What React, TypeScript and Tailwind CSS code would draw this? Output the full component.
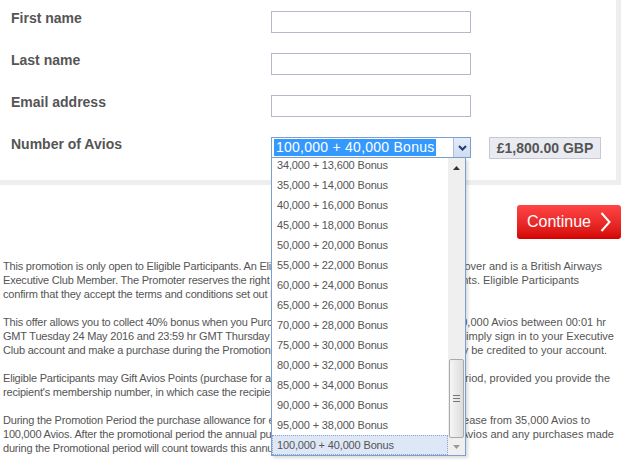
import React from "react";

const items = [
  "34,000 + 13,600 Bonus",
  "35,000 + 14,000 Bonus",
  "40,000 + 16,000 Bonus",
  "45,000 + 18,000 Bonus",
  "50,000 + 20,000 Bonus",
  "55,000 + 22,000 Bonus",
  "60,000 + 24,000 Bonus",
  "65,000 + 26,000 Bonus",
  "70,000 + 28,000 Bonus",
  "75,000 + 30,000 Bonus",
  "80,000 + 32,000 Bonus",
  "85,000 + 34,000 Bonus",
  "90,000 + 36,000 Bonus",
  "95,000 + 38,000 Bonus",
  "100,000 + 40,000 Bonus",
];

function Row({ label, children }: { label: string; children: React.ReactNode }) {
  return (
    <div className="flex h-[42px] items-start">
      <div className="w-[271px] pl-[11px] text-[14px] font-bold leading-[16px] text-[#555]">{label}</div>
      {children}
    </div>
  );
}

function TextInput() {
  return <div className="mt-[1px] h-[22px] w-[200px] border border-[#b5b8cb] bg-white" />;
}

function Dropdown() {
  return (
    <div className="absolute left-0 top-[21px] z-10 h-[298px] w-[195px] overflow-hidden border border-t-0 border-[#7a9fd0] bg-white shadow-[2px_2px_3px_rgba(0,0,0,0.15)]">
      <div className="flex h-full">
        <div className="flex-1 overflow-hidden">
          <div className="-mt-[3px] flex flex-col">
            {items.map((it, i) => {
              const last = i === items.length - 1;
              return (
                <div
                  key={it}
                  className={
                    last
                      ? "flex h-[20px] items-center border border-dotted border-[#8aa6d2] bg-[#dde7f6] pl-[4px] text-[11px] tracking-[-0.15px] text-[#555]"
                      : "flex h-[20px] items-center pl-[5px] text-[11px] tracking-[-0.15px] text-[#555]"
                  }
                >
                  {it}
                </div>
              );
            })}
          </div>
        </div>
        <div className="relative flex w-[17px] flex-col bg-[#efefef]">
          <div className="flex h-[17px] items-center justify-center pt-[2px]">
            <svg width="7" height="4" viewBox="0 0 7 4">
              <polygon points="3.5,0 7,4 0,4" fill="#333" />
            </svg>
          </div>
          <div className="mx-[1px] mt-[184px] flex h-[79px] items-center justify-center rounded-[2px] border border-[#a9a9a9] bg-gradient-to-r from-[#f6f6f6] to-[#dcdcdc]">
            <div className="flex flex-col gap-[2px]">
              <div className="h-[1px] w-[7px] bg-[#777]" />
              <div className="h-[1px] w-[7px] bg-[#777]" />
              <div className="h-[1px] w-[7px] bg-[#777]" />
            </div>
          </div>
          <div className="flex h-[17px] items-center justify-center">
            <svg width="7" height="4" viewBox="0 0 7 4">
              <polygon points="0,0 7,0 3.5,4" fill="#999" />
            </svg>
          </div>
        </div>
      </div>
    </div>
  );
}

function Select() {
  return (
    <div className="relative h-[21px] w-[200px]">
      <div className="flex h-[21px] w-[200px] border border-[#7a9fd0] bg-white">
        <div className="flex flex-1 items-center pl-[2px]">
          <span className="bg-[#3399ff] px-[2px] text-[14px] leading-[17px] tracking-[0.25px] text-white">100,000 + 40,000 Bonus</span>
        </div>
        <div className="flex w-[17px] items-center justify-center border-l border-[#a8c0e0] bg-gradient-to-b from-[#e4ecf7] to-[#cfdcf0]">
          <svg width="9" height="6" viewBox="0 0 9 6">
            <polyline points="1,1 4.5,4.5 8,1" fill="none" stroke="#1e3d78" strokeWidth="2" />
          </svg>
        </div>
      </div>
      <Dropdown />
    </div>
  );
}

function Line({ left, right, w }: { left: string; right?: string; w: string }) {
  if (!right) {
    return <div className="whitespace-nowrap">{left}</div>;
  }
  return (
    <div className={`flex ${w}`}>
      <span className="min-w-0 flex-1 overflow-hidden whitespace-nowrap">{left}</span>
      <span className="shrink-0 whitespace-nowrap tracking-normal">{right}</span>
    </div>
  );
}

export default function App() {
  return (
    <div
      className="relative h-[462px] w-[633px] overflow-hidden bg-white text-[#555]"
      style={{ fontFamily: '"Liberation Sans", Arial, sans-serif' }}
    >
      <div className="h-[185px] w-[621px] border-b-[5px] border-r-[5px] border-[#eeeeee] pt-[10px]">
        <Row label="First name">
          <TextInput />
        </Row>
        <Row label="Last name">
          <TextInput />
        </Row>
        <Row label="Email address">
          <TextInput />
        </Row>
        <div className="flex items-start">
          <div className="w-[271px] pl-[11px] text-[14px] font-bold leading-[16px] text-[#555]">Number of Avios</div>
          <div className="mt-[1px]">
            <Select />
          </div>
          <div className="ml-[18px] mt-[1px] flex h-[22px] w-[112px] items-center justify-center border border-[#c5c9d6] bg-[#e9ebf1] text-[14px] font-bold text-[#555]">
            £1,800.00 GBP
          </div>
        </div>
      </div>

      <div className="mt-[20px] flex w-[621px] justify-end">
        <div className="flex h-[34px] w-[104px] items-center justify-center gap-[9px] rounded-[3px] bg-gradient-to-b from-[#ff4444] to-[#d40000] pb-[1px]">
          <span className="text-[16px] text-white">Continue</span>
          <svg width="11" height="20" viewBox="0 0 11 20">
            <polyline points="1.5,1 9.5,10 1.5,19" fill="none" stroke="white" strokeWidth="2" />
          </svg>
        </div>
      </div>

      <div className="mt-[20px] pl-[3px] text-[11px] leading-[14px] tracking-[-0.2px] text-[#555]">
        <div className="mb-[14px]">
          <Line
            w="w-[599px]"
            left="This promotion is only open to Eligible Participants. An Eligible Participant is anyone who is aged 18 years or over and"
            right="18 or over and is a British Airways"
          />
          <Line
            w="w-[576px]"
            left="Executive Club Member. The Promoter reserves the right to verify the eligibility of all Eligible Participants and"
            right="Participants. Eligible Participants"
          />
          <Line w="" left="confirm that they accept the terms and conditions set out below." />
        </div>
        <div className="mb-[14px]">
          <Line
            w="w-[603px]"
            left="This offer allows you to collect 40% bonus when you Purchase or Gift between 34,000 and 100,000 Avios"
            right="and 100,000 Avios between 00:01 hr"
          />
          <Line
            w="w-[611px]"
            left="GMT Tuesday 24 May 2016 and 23:59 hr GMT Thursday 9 June 2016 (the Promotion Period)."
            right="Period). Simply sign in to your Executive"
          />
          <Line
            w="w-[604px]"
            left="Club account and make a purchase during the Promotion Period and your bonus Avios will automatically be"
            right="will automatically be credited to your account."
          />
        </div>
        <div className="mb-[14px]">
          <Line
            w="w-[607px]"
            left="Eligible Participants may Gift Avios Points (purchase for another member) during the Promotion Period"
            right="the Promotion Period, provided you provide the"
          />
          <Line w="" left="recipient's membership number, in which case the recipient will receive the bonus Avios." />
        </div>
        <div>
          <Line
            w="w-[587px]"
            left="During the Promotion Period the purchase allowance for each Executive Club account will increase from"
            right="will increase from 35,000 Avios to"
          />
          <Line
            w="w-[611px]"
            left="100,000 Avios. After the promotional period the annual purchase allowance returns to 35,000 Avios"
            right="returns to 35,000 Avios and any purchases made"
          />
          <Line w="" left="during the Promotional period will count towards this annual allowance." />
        </div>
      </div>
    </div>
  );
}
